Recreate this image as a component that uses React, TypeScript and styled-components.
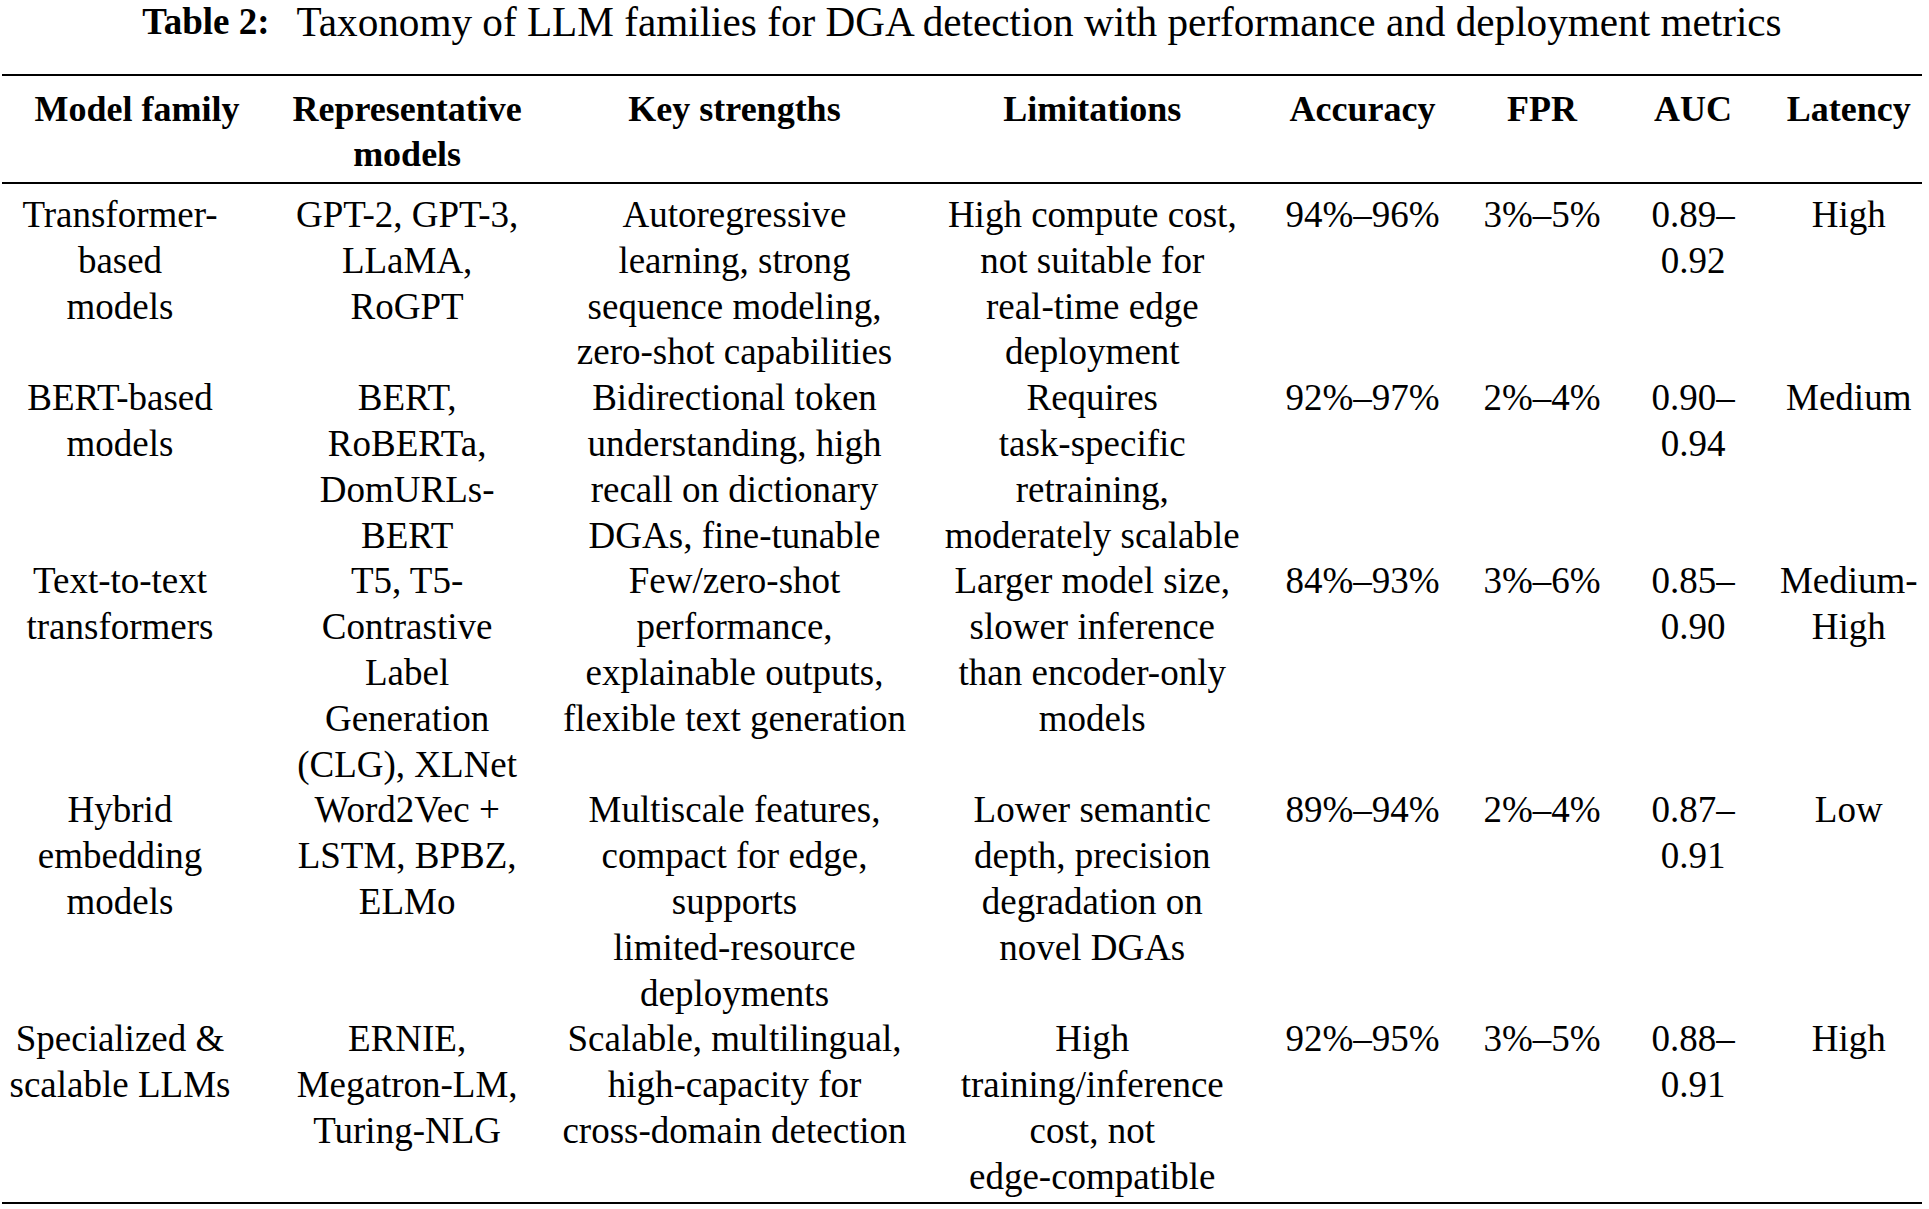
import React from 'react';
import styled, { createGlobalStyle } from 'styled-components';

const lineHeight = '45.8px';

// track widths of the eight columns, and how far the text sits off each track's centre
const columns = [
  { width: 261.5, shift: -12.75 },
  { width: 307.25, shift: -10 },
  { width: 342.5, shift: -7.5 },
  { width: 314, shift: 22 },
  { width: 225, shift: 22.75 },
  { width: 165.25, shift: 7.1 },
  { width: 153, shift: -1 },
  { width: 151.5, shift: 2.5 },
];

const headers: { lines: string[]; shift?: number }[] = [
  { lines: ['Model family'], shift: 4.25 },
  { lines: ['Representative', 'models'] },
  { lines: ['Key strengths'] },
  { lines: ['Limitations'] },
  { lines: ['Accuracy'] },
  { lines: ['FPR'] },
  { lines: ['AUC'] },
  { lines: ['Latency'] },
];

const rows: string[][][] = [
  [
    ['Transformer-', 'based', 'models'],
    ['GPT-2, GPT-3,', 'LLaMA,', 'RoGPT'],
    ['Autoregressive', 'learning, strong', 'sequence modeling,', 'zero-shot capabilities'],
    ['High compute cost,', 'not suitable for', 'real-time edge', 'deployment'],
    ['94%–96%'],
    ['3%–5%'],
    ['0.89–', '0.92'],
    ['High'],
  ],
  [
    ['BERT-based', 'models'],
    ['BERT,', 'RoBERTa,', 'DomURLs-', 'BERT'],
    ['Bidirectional token', 'understanding, high', 'recall on dictionary', 'DGAs, fine-tunable'],
    ['Requires', 'task-specific', 'retraining,', 'moderately scalable'],
    ['92%–97%'],
    ['2%–4%'],
    ['0.90–', '0.94'],
    ['Medium'],
  ],
  [
    ['Text-to-text', 'transformers'],
    ['T5, T5-', 'Contrastive', 'Label', 'Generation', '(CLG), XLNet'],
    ['Few/zero-shot', 'performance,', 'explainable outputs,', 'flexible text generation'],
    ['Larger model size,', 'slower inference', 'than encoder-only', 'models'],
    ['84%–93%'],
    ['3%–6%'],
    ['0.85–', '0.90'],
    ['Medium-', 'High'],
  ],
  [
    ['Hybrid', 'embedding', 'models'],
    ['Word2Vec +', 'LSTM, BPBZ,', 'ELMo'],
    ['Multiscale features,', 'compact for edge,', 'supports', 'limited-resource', 'deployments'],
    ['Lower semantic', 'depth, precision', 'degradation on', 'novel DGAs'],
    ['89%–94%'],
    ['2%–4%'],
    ['0.87–', '0.91'],
    ['Low'],
  ],
  [
    ['Specialized &', 'scalable LLMs'],
    ['ERNIE,', 'Megatron-LM,', 'Turing-NLG'],
    ['Scalable, multilingual,', 'high-capacity for', 'cross-domain detection'],
    ['High', 'training/inference', 'cost, not', 'edge-compatible'],
    ['92%–95%'],
    ['3%–5%'],
    ['0.88–', '0.91'],
    ['High'],
  ],
];

const App = (): JSX.Element => {
  return (
    <>
      <GlobalStyle />
      <Page>
        <Caption>
          <CaptionLabel>Table 2:</CaptionLabel>
          Taxonomy of LLM families for DGA detection with performance and deployment metrics
        </Caption>
        <Table>
          <TableHead>
            {headers.map((h, i) => (
              <Cell key={i} $shift={h.shift ?? columns[i].shift}>
                {h.lines.map((l) => (
                  <Line key={l}>{l}</Line>
                ))}
              </Cell>
            ))}
          </TableHead>
          <TableBody>
            {rows.map((row, r) =>
              row.map((cell, c) => (
                <Cell key={`${r}-${c}`} $shift={columns[c].shift}>
                  {cell.map((l, k) => (
                    <Line key={k}>{l}</Line>
                  ))}
                </Cell>
              )),
            )}
          </TableBody>
        </Table>
      </Page>
    </>
  );
};

const GlobalStyle = createGlobalStyle`
  html, body {
    margin: 0;
    padding: 0;
    background: #ffffff;
  }
  body {
    font-family: "Liberation Serif", "Times New Roman", serif;
    color: #000000;
  }
`;

const Page = styled.div`
  width: 1929px;
  height: 1209px;
  overflow: hidden;
  padding: 0 7px 0 2px;
  box-sizing: border-box;
`;

const Caption = styled.div`
  height: 44px;
  margin-bottom: 29.5px;
  display: flex;
  align-items: center;
  justify-content: center;
  font-size: 41.2px;
  line-height: 44px;
  white-space: nowrap;
`;

const CaptionLabel = styled.span`
  font-weight: bold;
  font-size: 37px;
  margin-right: 27px;
`;

const Table = styled.div`
  width: 1920px;
`;

const gridTemplate = columns.map((c) => `${c.width}px`).join(' ');

const TableHead = styled.div`
  display: grid;
  grid-template-columns: ${gridTemplate};
  border-top: 2.5px solid #000000;
  border-bottom: 2px solid #000000;
  padding: 11px 0 4px;
  font-weight: bold;
  font-size: 36px;
  line-height: ${lineHeight};
`;

const TableBody = styled.div`
  display: grid;
  grid-template-columns: ${gridTemplate};
  align-items: start;
  border-bottom: 2.5px solid #000000;
  padding: 8px 0 2.5px;
  font-size: 37px;
  line-height: ${lineHeight};
`;

const Cell = styled.div<{ $shift: number }>`
  display: flex;
  flex-direction: column;
  align-items: center;
  min-width: 0;
  padding-left: ${(p) => Math.max(0, p.$shift * 2)}px;
  padding-right: ${(p) => Math.max(0, -p.$shift * 2)}px;
  white-space: nowrap;
`;

const Line = styled.span`
  display: block;
`;

export default App;
